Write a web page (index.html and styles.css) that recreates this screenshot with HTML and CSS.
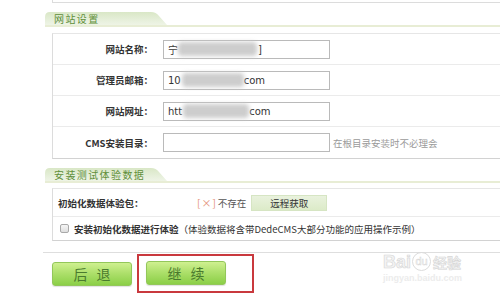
FILE: index.html
```html
<!DOCTYPE html>
<html lang="zh-CN">
<head>
<meta charset="utf-8">
<title>安装设置</title>
<link rel="stylesheet" href="styles.css">
</head>
<body>
<div class="page">
  <div class="prev"></div>

  <div class="sect-head"><span class="tab">网站设置</span></div>
  <div class="tbl tbl-site">
    <div class="row">
      <div class="lbl">网站名称：</div>
      <div class="inp">宁<span class="blob blob-1"></span>]</div>
    </div>
    <div class="row">
      <div class="lbl">管理员邮箱：</div>
      <div class="inp">10<span class="blob blob-2"></span>com</div>
    </div>
    <div class="row">
      <div class="lbl">网站网址：</div>
      <div class="inp">htt<span class="blob blob-3"></span>com</div>
    </div>
    <div class="row">
      <div class="lbl">CMS安装目录：</div>
      <div class="inp"></div>
      <span class="hint">在根目录安装时不必理会</span>
    </div>
  </div>

  <div class="sect-head"><span class="tab">安装测试体验数据</span></div>
  <div class="tbl tbl-demo">
    <div class="row row-pkg">
      <div class="lbl2">初始化数据体验包：</div>
      <span class="miss">[×]</span>
      <span class="miss-text">不存在</span>
      <span class="remote">远程获取</span>
    </div>
    <div class="row row-check">
      <span class="check"></span>
      <span class="check-text"><b>安装初始化数据进行体验</b>（体验数据将含带DedeCMS大部分功能的应用操作示例）</span>
    </div>
  </div>

  <div class="bar">
    <span class="btn">后 退</span>
    <div class="mark"><span class="btn">继 续</span></div>
  </div>
</div>

<div class="watermark">
  <div class="wm-logo"><span class="wm-bai">Bai</span><span class="wm-du">du</span><span class="wm-jy">经验</span></div>
  <div class="wm-url">jingyan.baidu.com</div>
</div>
</body>
</html>
```
FILE: styles.css
```css
* { box-sizing: border-box; margin: 0; padding: 0; }
html, body { background: #fff; }
body {
  width: 500px;
  height: 295px;
  overflow: hidden;
  position: relative;
  font-family: "Noto Sans CJK SC", "Noto Sans", sans-serif;
  font-size: 9.5px;
  color: #333;
}
.page { padding-left: 43px; }

.prev {
  margin-left: 9px;
  height: 3px;
  border-left: 1px solid #dcdcdc;
  border-bottom: 1px solid #dcdcdc;
}

.sect-head {
  margin-top: 9px;
  margin-left: 2px;
  height: 15px;
  border-bottom: 2px solid #e8edd5;
}
.tab {
  display: block;
  width: 122px;
  height: 13px;
  padding-left: 9px;
  background: linear-gradient(180deg, #d9e7c6 0%, #e6efda 60%, #eef4e6 100%);
  clip-path: path('M0 13 L0 5 Q0 0 5 0 L106 0 Q111 0 114 4 L122 13 Z');
  color: #5f8f3a;
  font-size: 10px;
  line-height: 13px;
  letter-spacing: 1.4px;
}

.tbl {
  margin-left: 9px;
  border-left: 1px solid #dcdcdc;
  border-top: 1px solid #e6e6e6;
  border-bottom: 1px solid #d2d2d2;
}
.tbl-site { margin-top: 6px; }
.tbl-demo { margin-top: 5px; }

.row {
  display: flex;
  align-items: center;
  height: 31px;
  border-bottom: 1px solid #ebebeb;
}
.row:last-child { border-bottom: none; }

.lbl {
  width: 100px;
  text-align: right;
  font-weight: bold;
  color: #333;
}
.inp {
  margin-left: 10px;
  width: 167px;
  height: 19px;
  border: 1px solid #bababa;
  padding-left: 4px;
  display: flex;
  align-items: center;
  font-family: "DejaVu Sans", "Noto Sans CJK SC", sans-serif;
  font-size: 10px;
  color: #333;
  background: #fff;
}
.blob {
  display: inline-block;
  height: 14px;
  background: #cdcdcd;
  filter: blur(2px);
  border-radius: 4px;
}
.blob-1 { width: 79px; margin-right: 1px; }
.blob-2 { width: 62px; margin-left: 1px; }
.blob-3 { width: 66px; margin-left: 1px; }
.hint { margin-left: 3px; color: #9a9a9a; }

.row-pkg { height: 28px; }
.row-check { height: 23px; }
.lbl2 {
  width: 144px;
  padding-left: 5px;
  font-weight: bold;
  color: #333;
}
.miss { color: #e49078; letter-spacing: 1px; font-size: 10px; }
.miss-text { margin-left: 1px; color: #555; }
.remote {
  margin-left: 5px;
  width: 76px;
  height: 16px;
  line-height: 14px;
  text-align: center;
  background: linear-gradient(180deg, #e9f2dd, #dcebc8);
  border: 1px solid #d6e5c3;
  color: #333;
}
.check {
  margin-left: 7px;
  width: 9px;
  height: 9px;
  border: 1px solid #a9a9a9;
  border-radius: 2px;
  background: linear-gradient(180deg, #f6f6f6, #dedede);
}
.check-text { margin-left: 5px; color: #333; }
.check-text b { font-weight: bold; }

.bar {
  margin-top: 11px;
  border-top: 1px solid #dedede;
  padding: 1px 0 0 9px;
  display: flex;
  align-items: center;
}
.btn {
  display: flex;
  align-items: center;
  justify-content: center;
  width: 80px;
  height: 24px;
  border: 1px solid #93c75a;
  border-radius: 3px;
  background: linear-gradient(180deg, #cff090 0%, #aee06c 45%, #8bcf47 100%);
  box-shadow: 0 1px 1px rgba(0,0,0,0.12);
  color: #4a7a2e;
  font-size: 14px;
  word-spacing: 6px;
}
.mark {
  margin-left: 5px;
  border: 2px solid #c9393e;
  padding: 5px 26px 6px 7px;
}

.watermark {
  position: absolute;
  left: 383px;
  top: 244px;
  color: #f3f3f3;
  -webkit-text-stroke: 0.6px #d6d6d6;
}
.wm-logo { display: flex; align-items: flex-end; height: 27px; }
.wm-bai { font-family: "Liberation Sans", sans-serif; font-weight: bold; font-size: 18px; line-height: 18px; }
.wm-du {
  margin-left: 1px;
  width: 19px;
  height: 19px;
  border-radius: 50%;
  border: 1px solid #dcdcdc;
  font-family: "Liberation Sans", sans-serif;
  font-size: 11px;
  line-height: 17px;
  text-align: center;
  -webkit-text-stroke: 0.4px #d6d6d6;
}
.wm-jy { margin-left: 2px; font-size: 14px; line-height: 18px; font-weight: bold; }
.wm-url {
  margin-top: 2px;
  font-family: "Liberation Sans", sans-serif;
  font-size: 9px;
  font-weight: bold;
  color: #ececec;
  -webkit-text-stroke: 0;
}
```
